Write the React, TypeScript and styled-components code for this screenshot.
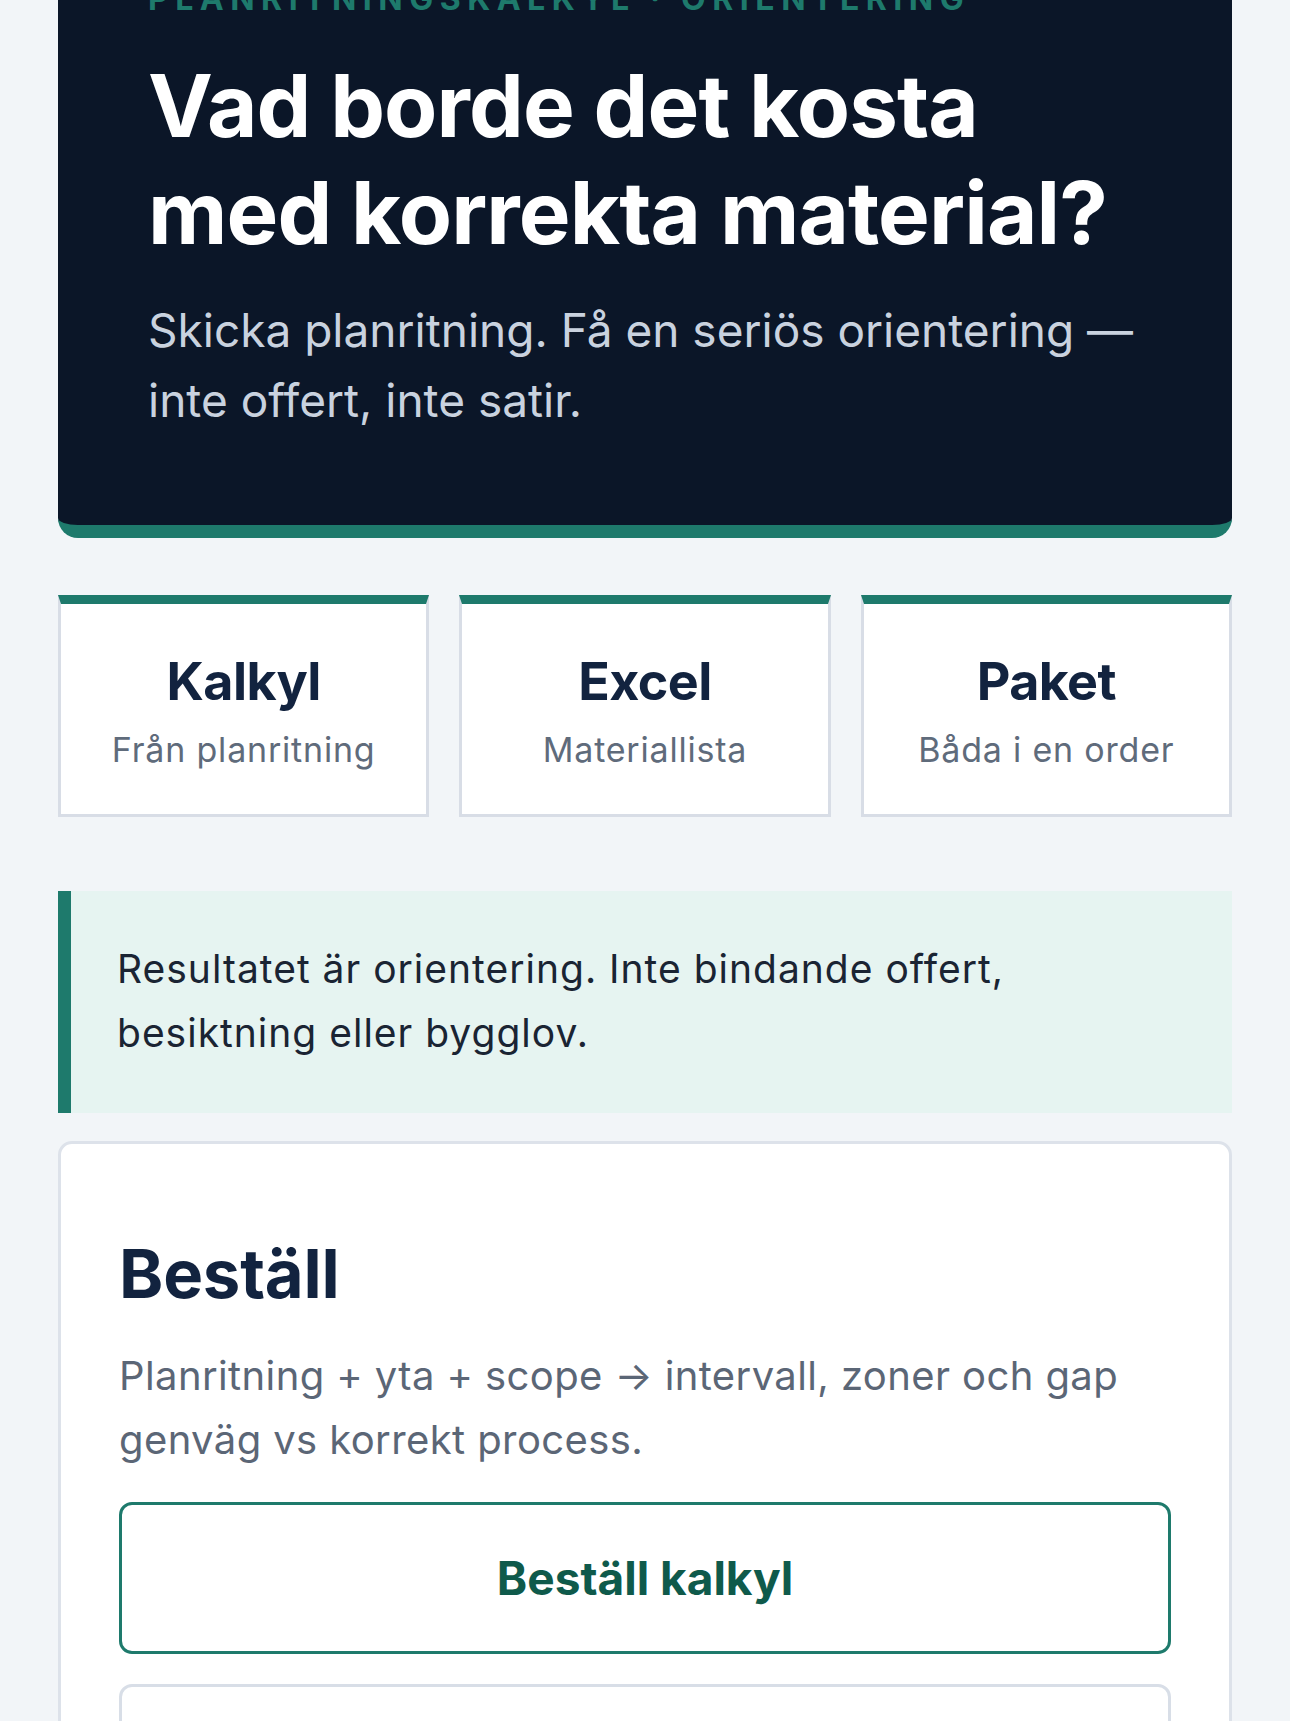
import React, { FC } from "react";
import styled, { createGlobalStyle } from "styled-components";

const teal = "#1e7a6c";
const navy = "#0b1628";
const ink = "#12233f";

const GlobalStyle = createGlobalStyle`
  html, body {
    margin: 0;
    padding: 0;
    background: #f2f5f8;
  }
  body {
    font-family: "Inter", "Noto Sans", "Liberation Sans", sans-serif;
    -webkit-font-smoothing: antialiased;
  }
  * {
    box-sizing: border-box;
  }
`;

interface Tile {
  title: string;
  sub: string;
}

const tiles: Tile[] = [
  { title: "Kalkyl", sub: "Från planritning" },
  { title: "Excel", sub: "Materiallista" },
  { title: "Paket", sub: "Båda i en order" },
];

const App: FC = () => {
  return (
    <Page>
      <GlobalStyle />
      <Hero>
        <Eyebrow>Planritningskalkyl · Orientering</Eyebrow>
        <HeroTitle>
          Vad borde det kosta
          <br />
          med korrekta material?
        </HeroTitle>
        <HeroLead>
          Skicka planritning. Få en seriös orientering —
          <br />
          inte offert, inte satir.
        </HeroLead>
      </Hero>

      <TileRow>
        {tiles.map(t => (
          <TileCard key={t.title}>
            <TileTitle>{t.title}</TileTitle>
            <TileSub>{t.sub}</TileSub>
          </TileCard>
        ))}
      </TileRow>

      <Notice>
        Resultatet är orientering. Inte bindande offert,
        <br />
        besiktning eller bygglov.
      </Notice>

      <OrderCard>
        <OrderTitle>Beställ</OrderTitle>
        <OrderLead>
          Planritning + yta + scope → intervall, zoner och gap
          <br />
          genväg vs korrekt process.
        </OrderLead>
        <ActionButton type="button" primary>
          Beställ kalkyl
        </ActionButton>
        <ActionButton type="button">Beställ materiallista</ActionButton>
      </OrderCard>
    </Page>
  );
};

const Page = styled.div`
  padding: 0 58px 120px;
  display: flex;
  flex-direction: column;
`;

const Hero = styled.section`
  margin-top: -110px;
  padding: 90px;
  background: ${navy};
  border-radius: 20px;
  border-bottom: 13px solid ${teal};
`;

const Eyebrow = styled.div`
  color: ${teal};
  font-size: 32px;
  line-height: 38px;
  font-weight: 700;
  letter-spacing: 6.5px;
  text-transform: uppercase;
  white-space: nowrap;
  margin-bottom: 34px;
`;

const HeroTitle = styled.h1`
  margin: 0 0 29px;
  color: #ffffff;
  font-size: 87px;
  line-height: 107px;
  font-weight: 700;
  letter-spacing: -0.9px;
  white-space: nowrap;
`;

const HeroLead = styled.p`
  margin: 0;
  color: #c9d2df;
  font-size: 46px;
  line-height: 70px;
  font-weight: 400;
  white-space: nowrap;
`;

const TileRow = styled.div`
  margin-top: 57px;
  display: grid;
  grid-template-columns: repeat(3, 1fr);
  gap: 30px;
`;

const TileCard = styled.div`
  height: 222px;
  background: #ffffff;
  border: 3px solid #d8dde6;
  border-top: 9px solid ${teal};
  display: flex;
  flex-direction: column;
  align-items: center;
  justify-content: center;
  gap: 13px;
  padding-top: 6px;
`;

const TileTitle = styled.div`
  color: ${ink};
  font-size: 52px;
  line-height: 62px;
  font-weight: 700;
  letter-spacing: -0.6px;
`;

const TileSub = styled.div`
  color: #5f6b7b;
  font-size: 34px;
  line-height: 48px;
  letter-spacing: 0.8px;
`;

const Notice = styled.div`
  margin-top: 74px;
  background: #e6f4f1;
  border-left: 13px solid ${teal};
  padding: 46px 46px 48px;
  color: #1a2433;
  font-size: 39px;
  line-height: 64px;
  letter-spacing: 1px;
`;

const OrderCard = styled.section`
  margin-top: 28px;
  background: #ffffff;
  border: 3px solid #dde2ea;
  border-radius: 14px;
  padding: 90px 58px 60px;
  display: flex;
  flex-direction: column;
`;

const OrderTitle = styled.h2`
  margin: 0 0 30px;
  color: ${ink};
  font-size: 67px;
  line-height: 80px;
  font-weight: 700;
  letter-spacing: -0.2px;
`;

const OrderLead = styled.p`
  margin: 0 0 30px;
  color: #5b6676;
  font-size: 40px;
  line-height: 64px;
  letter-spacing: 0.4px;
`;

const ActionButton = styled.button<{ primary?: boolean }>`
  height: 152px;
  width: 100%;
  background: #ffffff;
  border: 3px solid ${p => (p.primary ? teal : "#d8dee7")};
  border-radius: 13px;
  color: ${p => (p.primary ? "#0f5a4b" : ink)};
  font-family: inherit;
  font-size: 46px;
  font-weight: 700;
  letter-spacing: 0;
  cursor: pointer;
  & + & {
    margin-top: 30px;
  }
`;

export default App;
